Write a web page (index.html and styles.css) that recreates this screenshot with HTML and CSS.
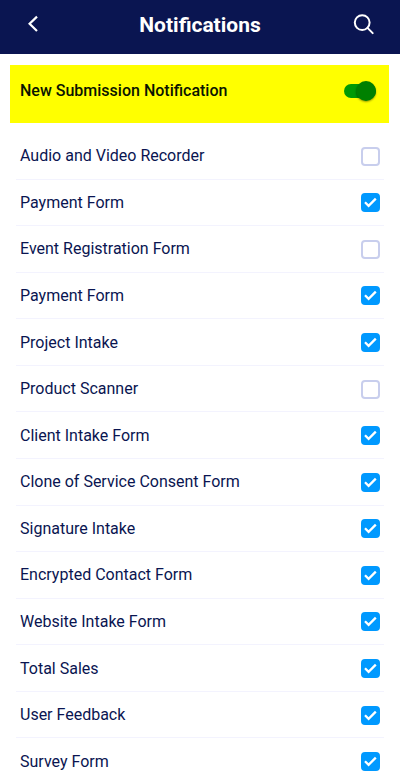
FILE: index.html
```html
<!DOCTYPE html>
<html lang="en">
<head>
<meta charset="utf-8">
<meta name="viewport" content="width=device-width, initial-scale=1">
<title>Notifications</title>
<link rel="stylesheet" href="styles.css">
</head>
<body>
<header class="topbar">
  <button class="icon-button" type="button" aria-label="Back">
    <svg width="24" height="24" viewBox="0 0 24 24" fill="none" stroke="currentColor" stroke-width="2.2"><path d="M13 3.6 5.6 10.8l7.4 7.2"/></svg>
  </button>
  <h1 class="title">Notifications</h1>
  <button class="icon-button" type="button" aria-label="Search">
    <svg width="24" height="24" viewBox="0 0 24 24" fill="none" stroke="currentColor" stroke-width="2" stroke-linecap="round"><circle cx="10.2" cy="9.6" r="7.4"/><path d="m15.5 14.9 5.2 5.2"/></svg>
  </button>
</header>
<main>
  <label class="master">
    <span>New Submission Notification</span>
    <input class="switch" type="checkbox" role="switch" checked>
  </label>
  <ul class="forms">
    <li><label class="row"><span>Audio and Video Recorder</span><input class="check" type="checkbox"></label></li>
    <li><label class="row"><span>Payment Form</span><input class="check" type="checkbox" checked></label></li>
    <li><label class="row"><span>Event Registration Form</span><input class="check" type="checkbox"></label></li>
    <li><label class="row"><span>Payment Form</span><input class="check" type="checkbox" checked></label></li>
    <li><label class="row"><span>Project Intake</span><input class="check" type="checkbox" checked></label></li>
    <li><label class="row"><span>Product Scanner</span><input class="check" type="checkbox"></label></li>
    <li><label class="row"><span>Client Intake Form</span><input class="check" type="checkbox" checked></label></li>
    <li><label class="row"><span>Clone of Service Consent Form</span><input class="check" type="checkbox" checked></label></li>
    <li><label class="row"><span>Signature Intake</span><input class="check" type="checkbox" checked></label></li>
    <li><label class="row"><span>Encrypted Contact Form</span><input class="check" type="checkbox" checked></label></li>
    <li><label class="row"><span>Website Intake Form</span><input class="check" type="checkbox" checked></label></li>
    <li><label class="row"><span>Total Sales</span><input class="check" type="checkbox" checked></label></li>
    <li><label class="row"><span>User Feedback</span><input class="check" type="checkbox" checked></label></li>
    <li><label class="row"><span>Survey Form</span><input class="check" type="checkbox" checked></label></li>
  </ul>
</main>
</body>
</html>
```
FILE: styles.css
```css
* {
  box-sizing: border-box;
}

html {
  scrollbar-width: none;
}

body {
  margin: 0;
  background: #fff;
  color: #0a1551;
  font: 16px/20px Roboto, sans-serif;
}

.topbar {
  display: flex;
  align-items: center;
  justify-content: space-between;
  padding: 9px 23px 13px;
  background: #0a1551;
  color: #fff;
}

.title {
  margin: 0;
  font-size: 21px;
  line-height: 32px;
  font-weight: 700;
}

.icon-button {
  display: flex;
  padding: 1px;
  border: 0;
  background: none;
  color: inherit;
}

.master {
  display: flex;
  align-items: center;
  justify-content: space-between;
  margin: 11px 11px 0 10px;
  padding: 16px 13px 22px 10px;
  background: #ff0;
  color: #0a1400;
  font-weight: 500;
}

.switch {
  appearance: none;
  display: flex;
  align-items: center;
  justify-content: flex-end;
  width: 32px;
  height: 14px;
  margin: 3px 0;
  border-radius: 7px;
  background: #009a05;
}

.switch::before {
  content: "";
  width: 20px;
  height: 20px;
  flex: none;
  border-radius: 50%;
  background: #008000;
  box-shadow: 0 1px 2px #0006;
}

.switch:not(:checked) {
  justify-content: flex-start;
}

.forms {
  display: grid;
  grid-auto-rows: minmax(44px, 1fr);
  min-height: calc(100vh - 131px);
  margin: 10px 16px 0;
  padding: 0;
  list-style: none;
}

.forms li {
  display: grid;
  border-bottom: 1px solid #f3f3fe;
}

.row {
  display: flex;
  align-items: center;
  justify-content: space-between;
  padding: 1px 4px 0;
}

.check {
  appearance: none;
  width: 19px;
  height: 19px;
  margin: 0;
  border: 2px solid #c8ceed;
  border-radius: 4px;
  background: #fff;
}

.check:checked {
  border-color: #0099ff;
  background: #0099ff url("data:image/svg+xml,%3Csvg xmlns='http://www.w3.org/2000/svg' viewBox='0 0 15 15'%3E%3Cpath d='m2 7.2 3.6 3.6 7.2-7.2' fill='none' stroke='%23fff' stroke-width='2.3'/%3E%3C/svg%3E") center / 15px no-repeat;
}
```
